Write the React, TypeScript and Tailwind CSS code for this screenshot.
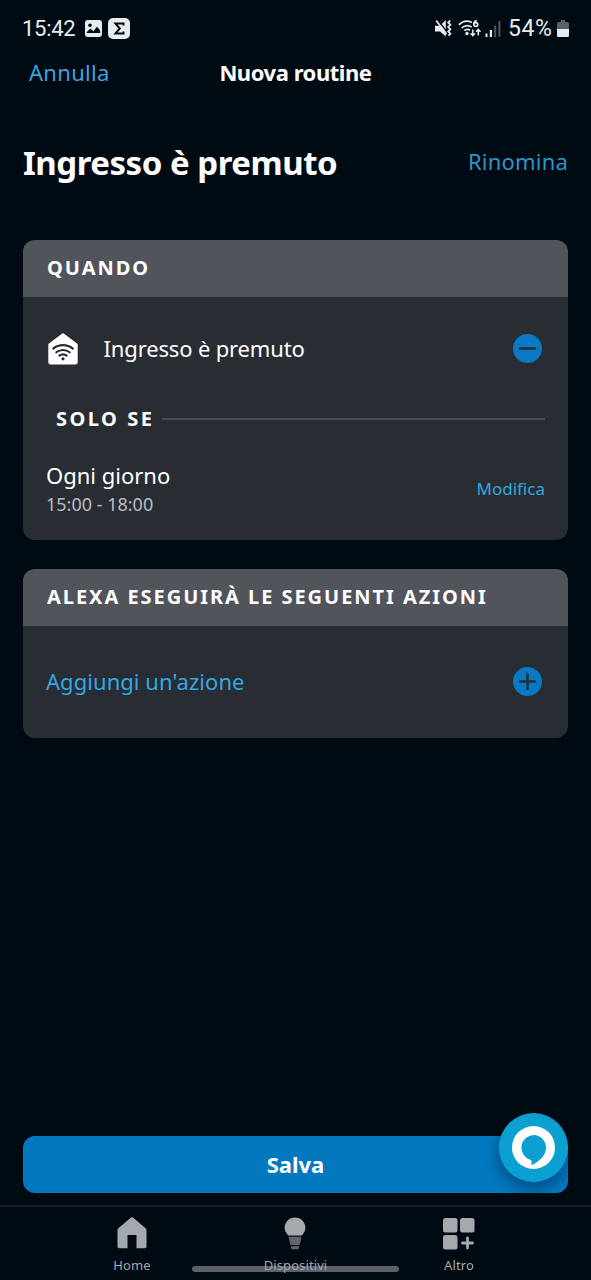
function StatusBar() {
  return (
    <div className="flex h-[57px] items-center justify-between pl-[22px] pr-[21px] text-[#e8ecef] font-['Roboto',sans-serif]">
      <div className="flex items-center">
        <span className="w-[54px] whitespace-nowrap text-[22px] leading-none tracking-[-0.3px]">15:42</span>
        <svg className="ml-[9px]" width="17" height="17" viewBox="0 0 17 17">
          <rect width="17" height="17" rx="3" fill="#e8ecef" />
          <circle cx="5" cy="5.3" r="1.8" fill="#000a12" />
          <path d="M1.8 13V12L5.5 8.5l2.8 2.7L12 6.800l3.200 3.700V13Z" fill="#000a12" />
        </svg>
        <span className="ml-[6px] flex h-[21px] w-[22px] items-center justify-center rounded-[5px] bg-[#e8ecef]">
          <svg width="12" height="13" viewBox="0 0 12 13">
            <path d="M10.500 3.500V1.600H2.500l4.300 4.900-4.300 4.900h8V9.500" fill="none" stroke="#000a12" strokeWidth="2" />
          </svg>
        </span>
      </div>
      <div className="flex items-center">
        <svg width="18" height="19" viewBox="0 0 18 19">
          <path d="M0 6.700h5L10.800 1v16.500L5 12.500H0Z" fill="#e8ecef" />
          <path d="M2.600.6 13 14.400" stroke="#000a12" strokeWidth="1.500" />
          <path d="M1.200 1.500 11.500 15.200" stroke="#e8ecef" strokeWidth="1.700" />
          <path d="m15.200 1.500-2 2 2.200 2.200-2.200 2.300 2.200 2.300-2.200 2.200 2.200 2.200-1.800 2" fill="none" stroke="#e8ecef" strokeWidth="1.800" />
        </svg>
        <svg className="ml-[5px]" width="23" height="19" viewBox="0 0 23 19">
          <g fill="none" stroke="#e8ecef" strokeWidth="1.700">
            <path d="M1 5.800C4.600 2 9.400 1.300 14 3.400" />
            <path d="M3.700 9c2.900-2.700 6.700-3 10-1" />
            <path d="M6.300 11.700c1.600-1.400 4-1.600 5.700-.4" />
            <path d="M18.800 1.500c-2.200.4-2.900 2-2.900 3.800" />
            <circle cx="17.800" cy="5.600" r="1.900" />
            <path d="M14.800 10.500v6M12.600 14.200l2.200 2.400 2.200-2.400M20.300 16.500v-6M18.100 12.800l2.200-2.400 2.200 2.400" strokeWidth="1.500" />
          </g>
          <circle cx="9" cy="14.500" r="1.700" fill="#e8ecef" />
        </svg>
        <svg className="ml-[4px]" width="16" height="17" viewBox="0 0 16 17">
          <path d="M.5 13.500h2V17h-2ZM4.800 10H7v7H4.800Z" fill="#e8ecef" />
          <path d="M9.200 5.500h2V17h-2ZM13.400 1h2v16h-2Z" fill="#4f565d" />
        </svg>
        <span className="ml-[7px] w-[46px] whitespace-nowrap text-[23px] leading-none tracking-[0.6px]">54%</span>
        <svg className="ml-[3px] mr-px" width="12" height="17" viewBox="0 0 12 17">
          <path d="M4 0h4v2h2.500a1.500 1.500 0 0 1 1.500 1.500V9.500H0v-6A1.500 1.500 0 0 1 1.500 2H4Z" fill="#5a6067" />
          <path d="M0 9h12v6.500a1.500 1.500 0 0 1-1.500 1.500h-9A1.500 1.500 0 0 1 0 15.500Z" fill="#e8ecef" />
        </svg>
      </div>
    </div>
  );
}

function RoundIcon({ plus = false }: { plus?: boolean }) {
  return (
    <svg className="-mt-px" width="29" height="29" viewBox="0 0 29 29">
      <circle cx="14.500" cy="14.500" r="14.500" fill="#0a79c4" />
      <path
        d={plus ? "M7 14.500h15M14.500 7v15" : "M7 14.500h15"}
        stroke="#232f3a"
        strokeWidth="2.500"
        strokeLinecap="round"
      />
    </svg>
  );
}

function SmartHomeIcon() {
  return (
    <svg width="30" height="32" viewBox="0 0 30 32">
      <path d="M13.600 1a2 2 0 0 1 2.800 0l12.600 9.500c.4.300.7.800.7 1.400V29a2.500 2.500 0 0 1-2.500 2.500H2.800A2.500 2.500 0 0 1 .3 29V11.900c0-.6.2-1.100.7-1.400Z" fill="#fff" />
      <g fill="none" stroke="#282c33" strokeWidth="2.100" strokeLinecap="round">
        <path d="M5.200 15.600c5.600-4.700 14-4.700 19.600 0" />
        <path d="M8.300 19.300c3.900-3.100 9.500-3.100 13.400 0" />
        <path d="M11.300 22.700c2.200-1.600 5.200-1.600 7.400 0" />
      </g>
      <circle cx="15" cy="25.800" r="1.600" fill="#282c33" />
    </svg>
  );
}

function CardHeader({ children }: { children: string }) {
  return (
    <h2 className="flex h-[57px] items-center bg-[#51545b] pb-px pl-6 text-[20px] leading-none font-bold tracking-[1.960px] whitespace-nowrap">
      {children}
    </h2>
  );
}

function BottomNav() {
  return (
    <nav className="relative mt-3 flex h-[75px] items-start justify-center border-t-2 border-[#161f27] text-[13px] text-[#a5a9ad]">
      <div className="absolute top-[59px] left-[192px] h-[6px] w-[207px] rounded-full bg-[#5d6067]" />
      <div className="relative flex w-[163.500px] flex-col items-center pt-[10px]">
        <svg width="30" height="32" viewBox="0 0 30 32">
          <path d="M13.400 1a2.300 2.300 0 0 1 3.200 0l12 10.200c.5.400.9 1.100.9 1.800v16.500a1.700 1.700 0 0 1-1.700 1.700h-8.300V18h-9v13.200H2.200a1.700 1.700 0 0 1-1.700-1.700V13c0-.7.3-1.400.9-1.800Z" fill="#a5a9ad" />
        </svg>
        <span className="mt-[8px] leading-4 tracking-[0.100px]">Home</span>
      </div>
      <div className="relative flex w-[163.500px] flex-col items-center pt-[10px]">
        <svg className="-ml-px" width="22" height="33" viewBox="0 0 22 33">
          <path d="M11 .5a10.200 10.200 0 0 1 7.500 17.200c-.5.500-.9.800-1.300.8H4.800c-.4 0-.8-.3-1.300-.8A10.200 10.200 0 0 1 11 .5Z" fill="#a5a9ad" />
          <path d="M4.500 19.700h13l-1.700 7.500c-.1.500-.4.700-.8.700H7c-.4 0-.7-.2-.8-.7ZM6.500 29.300h9l-.9 2.500c-.1.400-.3.500-.6.500H8c-.3 0-.5-.1-.6-.5Z" fill="#62666c" />
        </svg>
        <span className="mt-[7px] leading-4 tracking-[0.100px]">Dispositivi</span>
      </div>
      <div className="relative flex w-[163.500px] flex-col items-center pt-[11px]">
        <svg width="32" height="32" viewBox="0 0 32 32" fill="#a5a9ad">
          <rect width="14.500" height="14.500" rx="2.500" />
          <rect x="17" width="14.500" height="14.500" rx="2.500" />
          <rect y="17" width="14.500" height="14.500" rx="2.500" />
          <path d="M24.500 20v10M19.500 25h10" stroke="#a5a9ad" strokeWidth="2.800" strokeLinecap="round" />
        </svg>
        <span className="mt-[7px] leading-4 tracking-[0.100px]">Altro</span>
      </div>
    </nav>
  );
}

export default function App() {
  return (
    <div className="flex h-[1280px] w-[591px] flex-col overflow-hidden bg-[#000a12] text-white font-['Noto_Sans','Open_Sans',sans-serif]">
      <StatusBar />
      <header className="grid h-[34px] grid-cols-3 items-center px-[29px] pb-[4px] whitespace-nowrap">
        <button className="text-left text-[22px] leading-none tracking-[0.300px] text-[#3da3df]">Annulla</button>
        <h1 className="text-center text-[22px] leading-none font-bold tracking-[-0.450px]">Nuova routine</h1>
      </header>
      <div className="mt-[46px] flex h-[52px] items-center justify-between px-[23px] pb-[3px] whitespace-nowrap">
        <div className="mt-px text-[33px] leading-none font-bold tracking-[-0.480px]">Ingresso è premuto</div>
        <button className="mb-px text-[22px] leading-none tracking-[0.200px] text-[#2c95c7]">Rinomina</button>
      </div>

      <section className="mx-[23px] mt-[51px] h-[300px] overflow-hidden rounded-[12px] bg-[#282c33]">
        <CardHeader>QUANDO</CardHeader>
        <div className="mt-[30px] flex h-11 items-center pr-[26px] pl-[25px]">
          <SmartHomeIcon />
          <span className="mb-[2px] ml-[25.500px] flex-1 text-[22px] leading-none tracking-[-0.150px]">Ingresso è premuto</span>
          <RoundIcon />
        </div>
        <div className="mt-[36px] flex h-6 items-center pr-[23px] pl-[33px]">
          <span className="mb-px w-[106px] text-[20px] leading-none font-bold tracking-[2.500px] whitespace-nowrap">SOLO SE</span>
          <div className="h-[2px] flex-1 bg-[#484b51]" />
        </div>
        <div className="mt-[27px] flex h-[60px] items-center justify-between pr-[23px] pl-[23px]">
          <div className="flex flex-col">
            <span className="text-[22px] leading-[31px]">Ogni giorno</span>
            <span className="text-[18px] leading-[26px] text-[#b9bcc5]">15:00 - 18:00</span>
          </div>
          <button className="text-[17px] leading-none text-[#35a8e0]">Modifica</button>
        </div>
      </section>

      <section className="mx-[23px] mt-[29px] h-[169px] overflow-hidden rounded-[12px] bg-[#282c33]">
        <CardHeader>ALEXA ESEGUIRÀ LE SEGUENTI AZIONI</CardHeader>
        <div className="flex h-[112px] items-center justify-between pr-[26px] pl-[23px]">
          <span className="mb-[2px] text-[22px] leading-none tracking-[0.050px] text-[#35a8e0]">Aggiungi un'azione</span>
          <RoundIcon plus />
        </div>
      </section>

      <div className="relative mx-[23px] mt-auto h-[57px]">
        <div className="h-full overflow-hidden rounded-[12px] bg-[#0279bf]">
          <button className="relative flex h-full w-full items-center justify-center pb-[2px] text-[22px] leading-none font-bold">
            Salva
            <span className="absolute top-[-23px] right-0 h-[69px] w-[69px] rounded-full shadow-[0_6px_14px_2px_rgba(0,25,60,0.4)]" />
          </button>
        </div>
        <div className="absolute top-[-23px] right-0 flex h-[69px] w-[69px] items-center justify-center rounded-full bg-[#0ca0d2]">
          <svg width="43" height="43" viewBox="0 0 43 43">
            <circle cx="21.500" cy="21.500" r="21.500" fill="#fff" />
            <path d="M21.500 9A12.500 12.500 0 0 1 34 21.500C34 29.500 27.500 35.500 19.500 39.300V35.600c0-.9-.5-1.500-1.300-1.800A12.700 12.700 0 0 1 21.500 9Z" fill="#0ca0d2" />
          </svg>
        </div>
      </div>
      <BottomNav />
    </div>
  );
}
